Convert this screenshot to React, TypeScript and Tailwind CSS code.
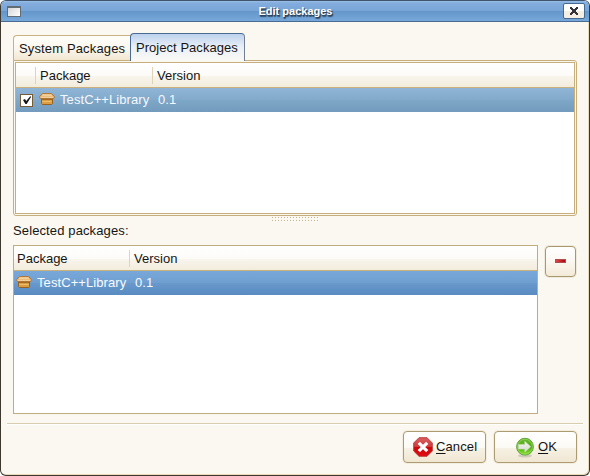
import React from "react";

function PackageIcon() {
  return (
    <svg width="16" height="12" viewBox="0 0 16 12" className="shrink-0">
      <path d="M2.5 5.5h11v5l-.8 1H3.3l-.8-1z" fill="#d99d45" stroke="#97601f" />
      <path d="M3.5.5h9l3 3.2-.7 1.8H1.2L.5 3.7z" fill="#e5ac64" stroke="#b07331" strokeWidth=".9" />
      <path d="M3.8 1.3h8.4l1.2 1.7H2.6z" fill="#f3cf98" />
      <path d="M1.6 4.2h12.8" stroke="#fce0b4" />
      <path d="M3 6.5h10" stroke="#a8691f" />
      <path d="M3.4 8.5h9.2" stroke="#efbd68" />
    </svg>
  );
}

function CancelIcon() {
  return (
    <svg width="20" height="20" viewBox="0 0 20 20" className="shrink-0">
      <defs>
        <linearGradient id="cancelRed" x1="0" y1="0" x2="0" y2="1">
          <stop offset="0" stopColor="#d9605f" />
          <stop offset=".48" stopColor="#cf3b3d" />
          <stop offset=".52" stopColor="#cc0509" />
          <stop offset="1" stopColor="#e30b10" />
        </linearGradient>
      </defs>
      <path d="M6 .7h8L19.3 6v8L14 19.3H6L.7 14V6z" fill="url(#cancelRed)" stroke="#b93335" strokeWidth=".9" />
      <path d="M5.8 5.8l8.4 8.4M14.2 5.8l-8.4 8.4" stroke="#fff" strokeWidth="3.2" />
    </svg>
  );
}

function OkIcon() {
  return (
    <svg width="20" height="21" viewBox="0 0 20 21" className="shrink-0">
      <defs>
        <linearGradient id="okGreen" x1="0" y1="0" x2="0" y2="1">
          <stop offset="0" stopColor="#68b62e" />
          <stop offset=".55" stopColor="#4fae10" />
          <stop offset="1" stopColor="#8be633" />
        </linearGradient>
        <linearGradient id="okArrow" x1="0" y1="0" x2="0" y2="1">
          <stop offset="0" stopColor="#f4f5f2" />
          <stop offset="1" stopColor="#d5dacf" />
        </linearGradient>
      </defs>
      <ellipse cx="10" cy="18.8" rx="7" ry="1.8" fill="#bdb9aa" opacity=".65" />
      <circle cx="10" cy="9.7" r="8.4" fill="url(#okGreen)" stroke="#5fa338" />
      <circle cx="10" cy="9.7" r="7.4" fill="none" stroke="#a1dc68" strokeWidth=".7" />
      <path d="M3.4 7.4h6.4V4.3l5.9 5.4-5.9 5.4V12H3.4z" fill="url(#okArrow)" stroke="#c9dfb7" strokeWidth=".6" />
    </svg>
  );
}

function Heading({ children }: { children: React.ReactNode }) {
  return (
    <div className="flex h-[25px] shrink-0 items-center border-b border-[#c9b17e] bg-[linear-gradient(#fff_0%,#fcfbf8_54%,#f8f5ed_56%,#f3ecdc_100%)] pt-px">
      {children}
    </div>
  );
}

function Divider() {
  return <div className="h-[17px] w-px shrink-0 bg-[#dfd3b8]" />;
}

export default function App() {
  return (
    <div className="h-[476px] w-[590px] overflow-hidden bg-white font-['Liberation_Sans',sans-serif] text-[13px] leading-[16px] text-[#151515]">
      <div className="flex h-full flex-col overflow-hidden rounded-[6px] border border-[#3d3930] border-t-[#40566f] bg-[#fbf8f1] shadow-[inset_-1px_-1px_#e8d9ba]">
        <header className="flex h-[21px] shrink-0 items-center border-b border-[#486b93] bg-[linear-gradient(#9bbfe8_0%,#83addd_10%,#78a5d8_48%,#6496ca_52%,#78a8da_100%)] pl-[6px] pr-1">
          <div className="mt-px h-[11px] w-[14px] border border-t-2 border-[#626c75] bg-[linear-gradient(135deg,#d5d5d5,#fff)]" />
          <h1 className="flex-1 pb-px pl-[7px] text-center text-[11px] leading-[16px] font-bold text-white [text-shadow:1px_1px_1px_#263950,1px_2px_1px_#35506d]">Edit packages</h1>
          <button aria-label="Close" className="flex h-[16px] w-[22px] items-center justify-center rounded-[2px] border border-[#456a91] bg-[linear-gradient(#fff_50%,#f4efe2_50%)]">
            <svg width="10" height="8" viewBox="0 0 10 8" shapeRendering="crispEdges" className="block">
              <path d="M1 0h2v1h1v1h2V1h1V0h2v2H8v1H7v2h1v1h1v2H7V7H6V6H4v1H3v1H1V6h1V5h1V3H2V2H1z" fill="#34343a" />
            </svg>
          </button>
        </header>

        <main className="flex flex-1 flex-col pl-3 pr-3 pt-[11px]">
          <div className="flex h-[27px] shrink-0 items-end">
            <div className="flex h-[25px] w-[117px] items-center rounded-tl-[4px] border-l border-t border-[#c8b27f] bg-[linear-gradient(#fffefa,#faf6ed_55%,#f1e6d1)] pl-[5px] pt-[2px] tracking-[0.14px] whitespace-nowrap">System Packages</div>
            <div className="z-10 -mb-px flex h-[28px] w-[115px] items-center rounded-t-[4px] border border-b-0 border-[#496b93] border-r-[#718090] bg-[linear-gradient(#bdd2ed,#e9eff6_48%,#fbf9f5)] pl-[5px] tracking-[0.04px] whitespace-nowrap">Project Packages</div>
          </div>
          <section className="flex h-[156px] shrink-0 flex-col rounded-b-[3px] rounded-tr-[3px] border border-[#c6af7c] p-px">
            <div className="flex flex-1 flex-col border border-[#c6af7c] bg-white">
              <Heading>
                <div className="w-[19px]" />
                <Divider />
                <div className="w-[116px] pl-1">Package</div>
                <Divider />
                <div className="pl-[4px]">Version</div>
              </Heading>
              <div className="flex h-6 items-center bg-[linear-gradient(#90b5d6_0%,#83aacb_49%,#7da6c7_51%,#739bbd_100%)] text-[#f4f8fc]">
                <div className="ml-1 flex h-[13px] w-[13px] shrink-0 items-center justify-center border border-[#765b35] bg-white">
                  <svg width="10" height="9" viewBox="0 0 10 9" className="shrink-0"><path d="M1 4l2-1 1.2 2.1L8.5 0 9 1 4.7 8H3.4z" fill="#171717" /></svg>
                </div>
                <div className="mb-[2px] ml-[6px]"><PackageIcon /></div>
                <span className="ml-[5px] w-[98px] tracking-[0.08px]">TestC++Library</span>
                <span className="tracking-[0.1px]">0.1</span>
              </div>
            </div>
          </section>
          <div className="flex h-[7px] shrink-0 justify-center pl-[2px] pt-px">
            <svg width="48" height="6" shapeRendering="crispEdges">
              <defs><pattern id="grip" width="3" height="3" patternUnits="userSpaceOnUse"><path d="M1 1h1v1H1z" fill="#fff" /><path d="M0 0h1v1H0z" fill="#c7b487" /></pattern></defs>
              <path d="M0 0h48v6H0z" fill="url(#grip)" />
            </svg>
          </div>
          <div className="h-[22px] shrink-0 tracking-[0.12px]">Selected packages:</div>
          <div className="flex h-[169px] shrink-0 gap-[7px]">
            <section className="flex w-[525px] flex-col border border-[#c0ad7f] bg-white">
              <Heading>
                <div className="w-[115px] pl-[3px]">Package</div>
                <Divider />
                <div className="pl-[4px]">Version</div>
              </Heading>
              <div className="flex h-6 items-center bg-[linear-gradient(#79a7da_0%,#6f9fd1_48%,#6998cb_52%,#588bc1_100%)] text-[#f7fbff]">
                <div className="mb-[2px] ml-[2px]"><PackageIcon /></div>
                <span className="ml-[5px] w-[98px] tracking-[0.08px]">TestC++Library</span>
                <span className="tracking-[0.1px]">0.1</span>
              </div>
            </section>
            <button aria-label="Remove package" className="mt-px flex h-[31px] w-[31px] items-center justify-center rounded-[4px] border border-[#a9976e] bg-[linear-gradient(#fff,#fbf8f1_50%,#f3ead8)] shadow-[0_0_0_1px_#f0eadb]">
              <span className="mt-[-1px] ml-[-1px] h-1 w-[11px] border border-[#b54a4c] bg-[linear-gradient(90deg,#df4649,#a90913)]" />
            </button>
          </div>
        </main>

        <footer className="flex h-[52px] shrink-0 flex-col px-[6px]">
          <div className="h-[2px] shrink-0 border-b border-t border-b-white border-t-[#d9cdaf]" />
          <div className="flex justify-end gap-2 pr-[6px] pt-[6px]">
            <button className="flex h-8 w-[83px] items-center rounded-[4px] border border-[#ad9b72] bg-[linear-gradient(#fff,#fcfaf5_52%,#f6f1e4_55%,#f0e7d2)] pl-[9px] shadow-[0_0_0_1px_#f3eddf]">
              <CancelIcon />
              <span className="mb-px ml-[3px] tracking-[0.12px]"><span className="underline underline-offset-2">C</span>ancel</span>
            </button>
            <button className="flex h-8 w-[83px] items-center rounded-[4px] border border-[#ad9b72] bg-[linear-gradient(#fff,#fcfaf5_52%,#f6f1e4_55%,#f0e7d2)] pl-5 shadow-[0_0_0_1px_#f3eddf]">
              <OkIcon />
              <span className="mb-px ml-[3px]"><span className="underline underline-offset-2">O</span>K</span>
            </button>
          </div>
        </footer>
      </div>
    </div>
  );
}
